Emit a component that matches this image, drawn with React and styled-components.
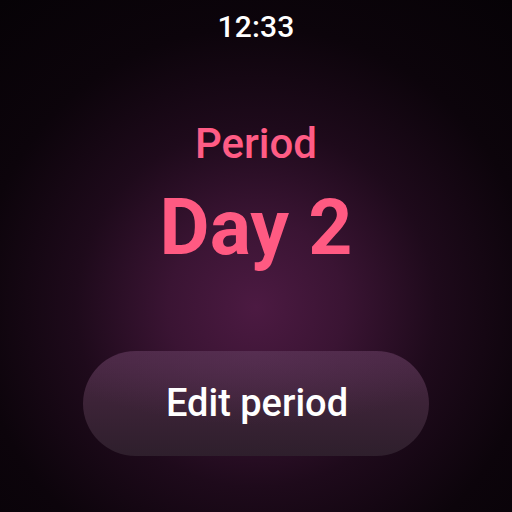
import React from "react";
import styled, { createGlobalStyle } from "styled-components";

const Global = createGlobalStyle`
  html, body { margin: 0; padding: 0; width: 512px; height: 512px; overflow: hidden; background: #000; }
  * { box-sizing: border-box; }
`;

const Screen = styled.div`
  width: 512px;
  height: 512px;
  display: flex;
  flex-direction: column;
  align-items: center;
  padding-top: 12px;
  font-family: Roboto, "Noto Sans", sans-serif;
  background: radial-gradient(circle at 50% 60%, #4c1a42 0%, #3a1433 22%, #1e0a1b 45%, #0c040b 70%, #060206 100%);
`;

const Clock = styled.div`
  font-size: 30px;
  line-height: 1;
  font-weight: 500;
  color: #ffffff;
  letter-spacing: 0.2px;
`;

const Label = styled.div`
  margin-top: 81px;
  font-size: 42px;
  line-height: 1;
  font-weight: 500;
  color: #ff5c85;
`;

const Value = styled.div`
  margin-top: 25px;
  font-size: 77px;
  line-height: 1;
  font-weight: 700;
  color: #ff5a82;
`;

const Button = styled.button`
  margin-top: 84px;
  width: 346px;
  height: 105px;
  border: none;
  border-radius: 53px;
  background:
    radial-gradient(ellipse 60% 70% at 50% 0%, rgba(95, 50, 90, 0.55) 0%, rgba(95, 50, 90, 0) 100%),
    linear-gradient(180deg, #4b2946 0%, #3c2337 50%, #2e1f2c 100%);
  color: #ffffff;
  font-family: Roboto, "Noto Sans", sans-serif;
  font-size: 38px;
  font-weight: 500;
  display: flex;
  align-items: center;
  justify-content: center;
  padding: 0 0 1px 2px;
`;

export default function App() {
  return (
    <>
      <Global />
      <Screen>
        <Clock>12:33</Clock>
        <Label>Period</Label>
        <Value>Day 2</Value>
        <Button>Edit period</Button>
      </Screen>
    </>
  );
}
